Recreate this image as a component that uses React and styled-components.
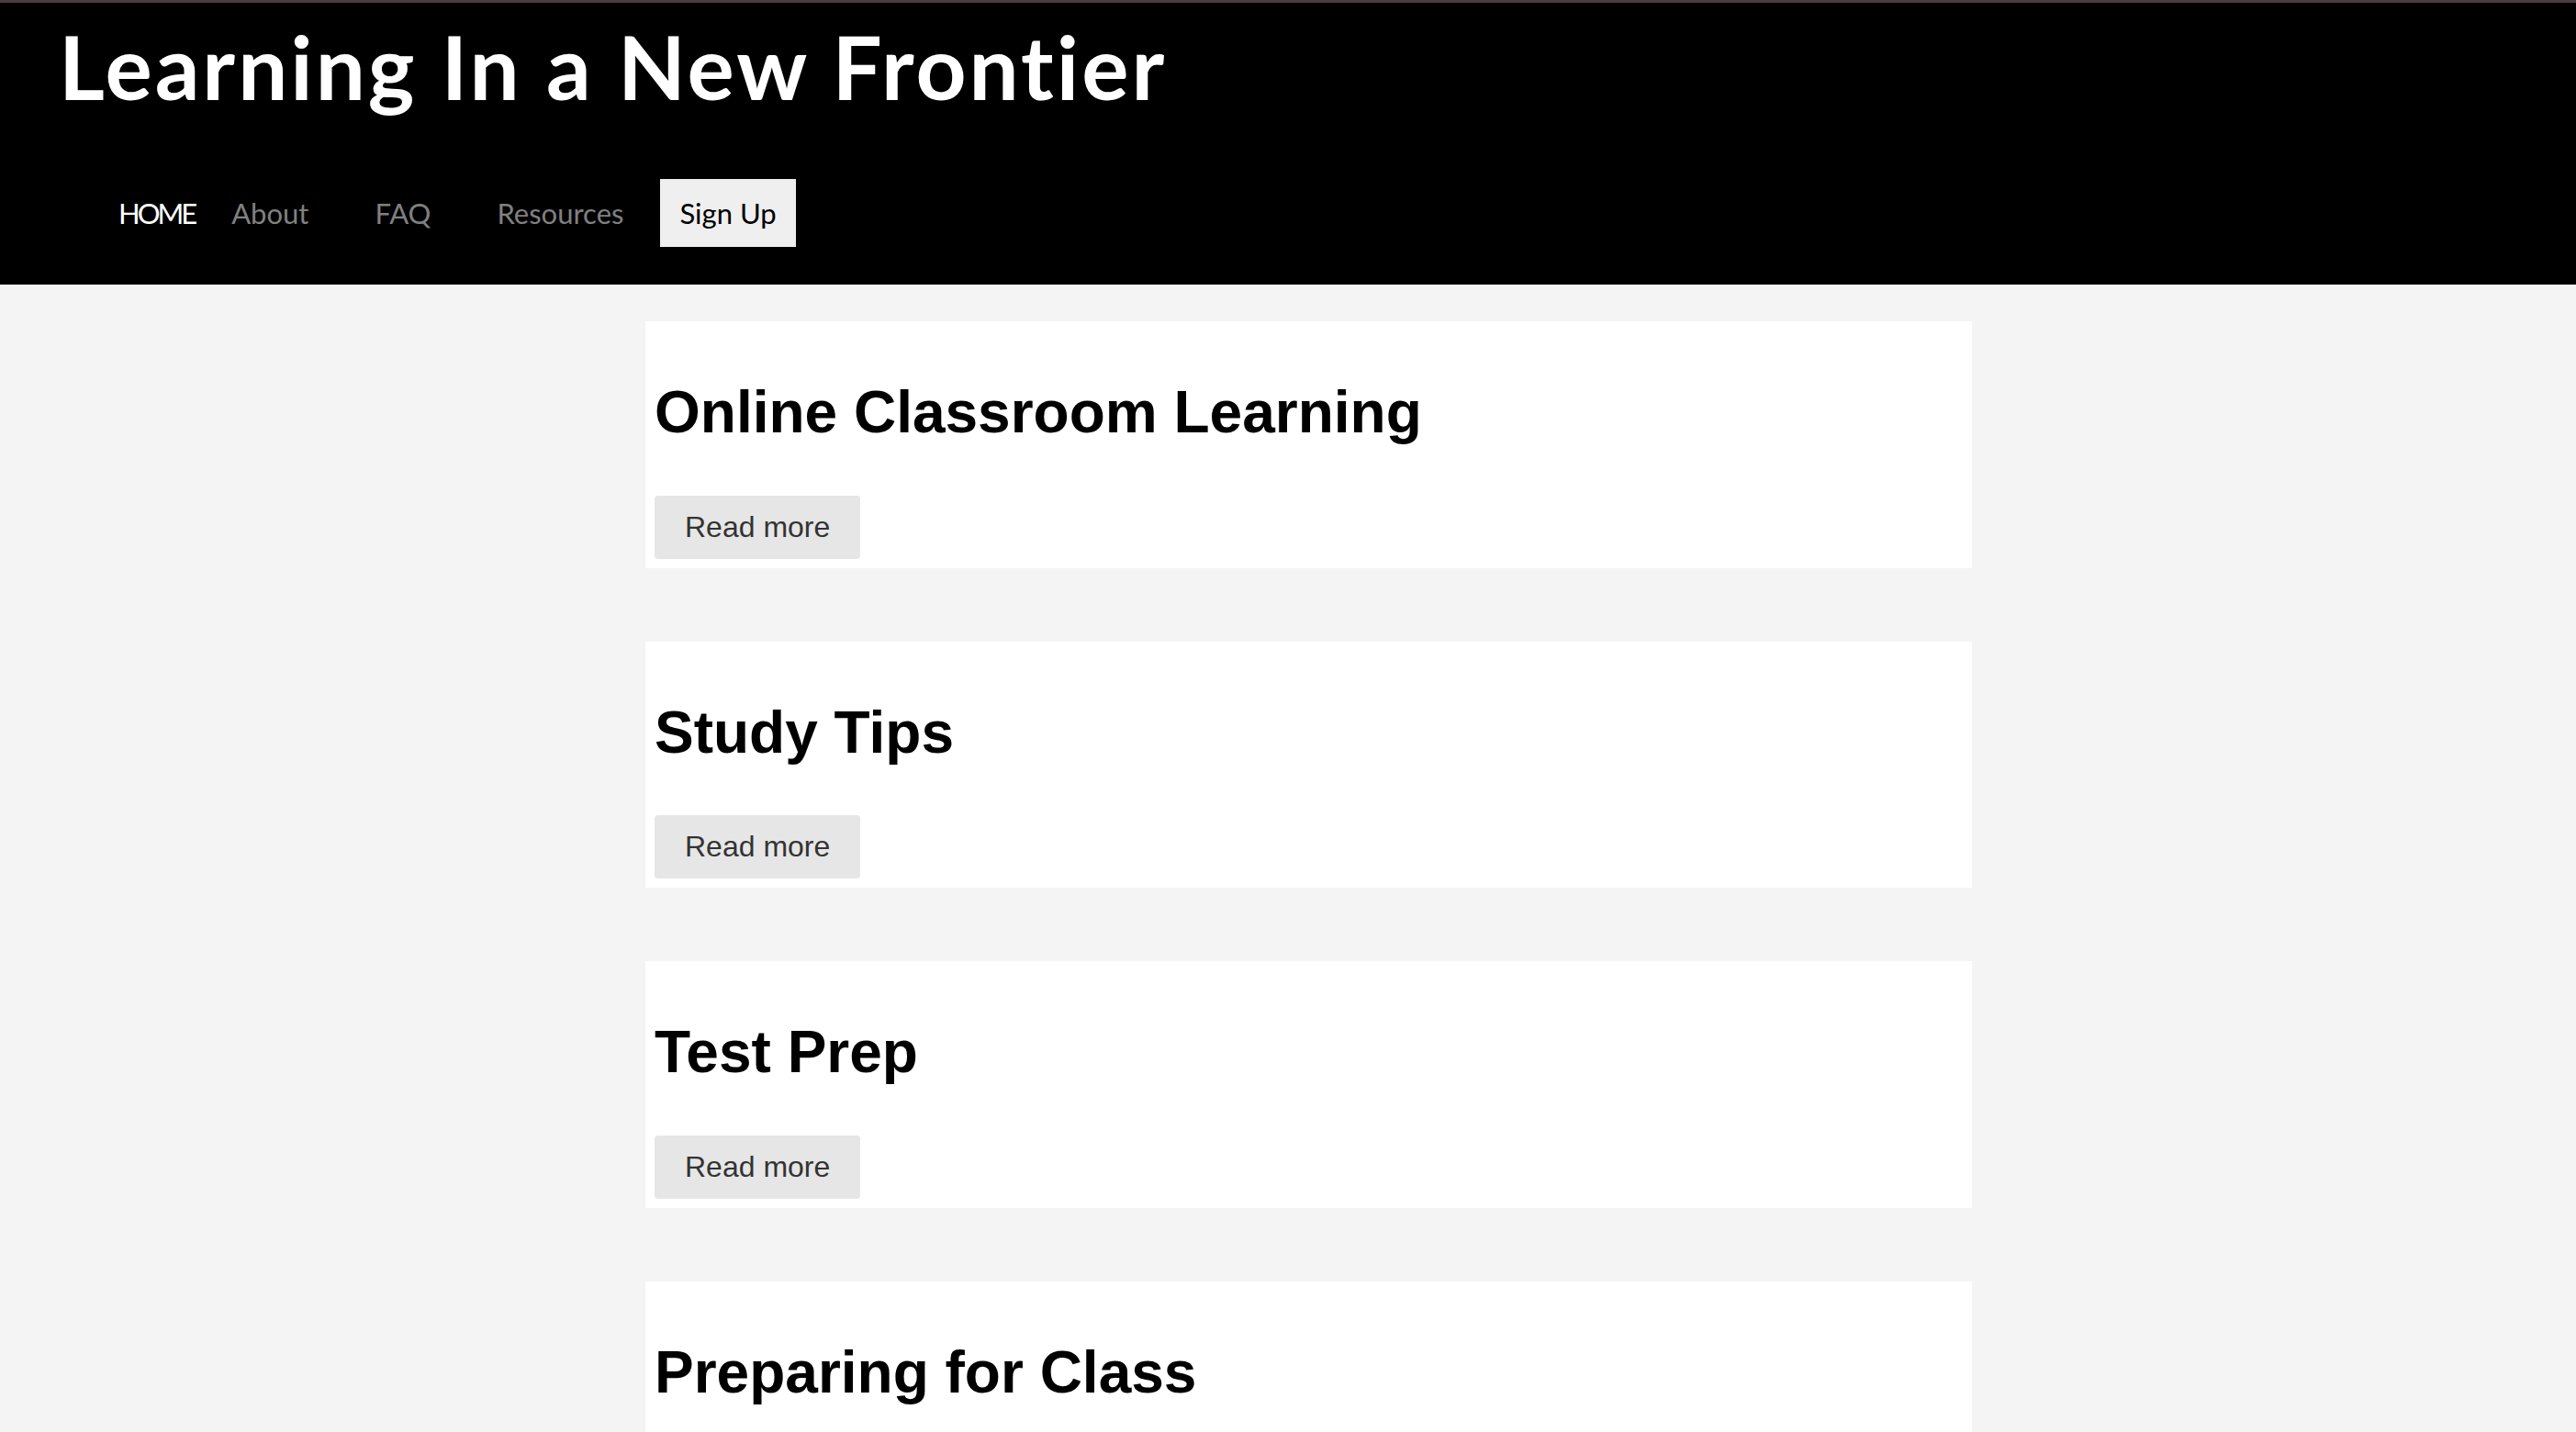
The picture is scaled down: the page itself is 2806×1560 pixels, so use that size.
import React from 'react'
import styled, { createGlobalStyle } from 'styled-components'

const GlobalStyle = createGlobalStyle`
  html, body {
    margin: 0;
    padding: 0;
    background: #f4f4f4;
  }

  body {
    font-family: "Liberation Sans", Arial, sans-serif;
  }
`

const Header = styled.header`
  background: #000;
  border-top: 3px solid #4b3b42;
  padding: 11px 0 41px 64px;
`

const SiteTitle = styled.h1`
  margin: 0;
  font-family: Lato, "Open Sans", sans-serif;
  font-weight: 700;
  font-size: 96px;
  line-height: 1.2;
  letter-spacing: 3px;
  font-variant-ligatures: none;
  color: #fff;
`

const Nav = styled.nav`
  display: flex;
  align-items: baseline;
  gap: 8px;
  margin-top: 66px;
  padding-left: 65px;
  font-family: Lato, "Open Sans", sans-serif;
  font-size: 31px;
`

const NavLink = styled.a`
  color: ${(p) => (p.$active ? '#fff' : '#808080')};
  padding: ${(p) => (p.$active ? '0' : '0 32px')};
  letter-spacing: ${(p) => (p.$active ? '-3px' : '0')};
  text-decoration: none;
  line-height: 38px;
`

const SignUp = styled.a`
  display: inline-block;
  background: #efefef;
  color: #000;
  padding: 18px 21px;
  line-height: 38px;
  text-decoration: none;
`

const Main = styled.main`
  display: flex;
  flex-direction: column;
  gap: 80px;
  width: 1445px;
  margin: 40px 0 0 703px;
`

const Card = styled.article`
  background: #fff;
  padding: 15px 9px 10px 10px;
`

const CardTitle = styled.h2`
  margin: 48px 0 53px;
  font-size: 64px;
  font-weight: 700;
  line-height: 1.15;
  color: #000;
`

const ReadMore = styled.button`
  display: block;
  border: none;
  border-radius: 4px;
  background: #e6e6e6;
  color: #333;
  font-family: "Liberation Sans", Arial, sans-serif;
  font-size: 32px;
  line-height: 37px;
  padding: 16px 33px;
  cursor: pointer;
`

const posts = [
  'Online Classroom Learning',
  'Study Tips',
  'Test Prep',
  'Preparing for Class',
]

const App = () => {
  return (
    <>
      <GlobalStyle />
      <Header>
        <SiteTitle>Learning In a New Frontier</SiteTitle>
        <Nav>
          <NavLink $active href="#">HOME</NavLink>
          <NavLink href="#">About</NavLink>
          <NavLink href="#">FAQ</NavLink>
          <NavLink href="#">Resources</NavLink>
          <SignUp href="#">Sign Up</SignUp>
        </Nav>
      </Header>
      <Main>
        {posts.map((title) => (
          <Card key={title}>
            <CardTitle>{title}</CardTitle>
            <ReadMore>Read more</ReadMore>
          </Card>
        ))}
      </Main>
    </>
  )
}

export default App
